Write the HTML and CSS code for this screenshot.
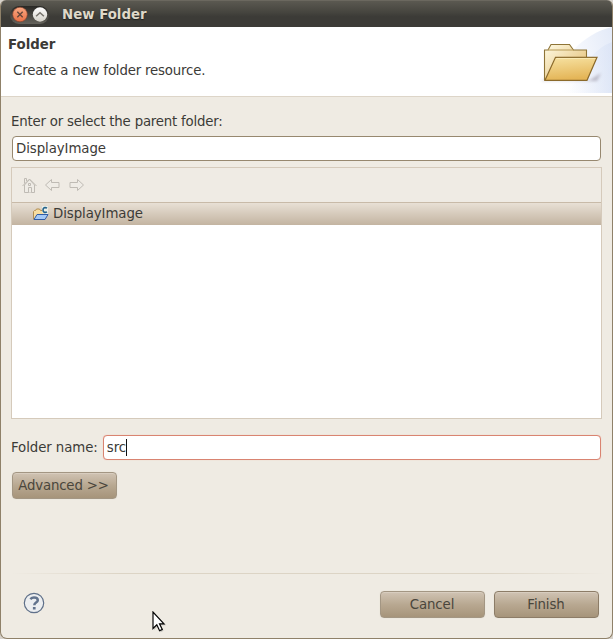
FILE: index.html
```
<!DOCTYPE html>
<html lang="en">
<head>
<meta charset="utf-8">
<title>New Folder</title>
<link rel="stylesheet" href="styles.css">
</head>
<body>
<main class="window">
  <header class="titlebar">
    <div class="controls">
      <svg width="39" height="18" viewBox="0 0 39 18">
        <defs>
          <linearGradient id="close" x2="0" y2="1"><stop stop-color="#f9a983"/><stop offset="1" stop-color="#ea7045"/></linearGradient>
          <linearGradient id="max" x2="0" y2="1"><stop stop-color="#fff"/><stop offset="1" stop-color="#d5d2c9"/></linearGradient>
        </defs>
        <circle cx="10" cy="8.500" r="7.300" fill="url(#close)" stroke="#8b402a" stroke-width=".6"/>
        <path d="M7.300 5.800l5.400 5.400M12.700 5.800l-5.400 5.400" stroke="#65473b" stroke-width="1.400"/>
        <circle cx="30" cy="8.500" r="7.200" fill="url(#max)"/>
        <path d="M26.100 10.200l3.900-3.500 3.900 3.500" fill="none" stroke="#77746d" stroke-width="1.500"/>
      </svg>
    </div>
    <h1 class="title">New Folder</h1>
  </header>
  <section class="banner">
    <div class="banner-text">
      <h2>Folder</h2>
      <p>Create a new folder resource.</p>
    </div>
    <svg class="banner-art" width="75" height="66" viewBox="0 0 75 66">
      <defs>
        <linearGradient id="sky" x1="0" x2="1" y1=".3"><stop stop-color="#fff"/><stop offset=".3" stop-color="#fafbfe"/><stop offset="1" stop-color="#e3eaf8"/></linearGradient>
        <linearGradient id="glow" x1="0" x2="1"><stop stop-color="#dce5f6" stop-opacity="0"/><stop offset="1" stop-color="#d3def4"/></linearGradient>
        <linearGradient id="back" x2="1" y2="1"><stop stop-color="#fffbe5"/><stop offset="1" stop-color="#dfb665"/></linearGradient>
        <linearGradient id="front" x2=".2" y2="1"><stop stop-color="#f7e3a4"/><stop offset="1" stop-color="#e4b557"/></linearGradient>
        <filter id="soft" x="-20%" y="-60%" width="140%" height="220%"><feGaussianBlur stdDeviation="1.8"/></filter>
      </defs>
      <path d="M75 0C46 7 25 30 8 66h67z" fill="url(#sky)"/>
      <path d="M75 15C56 22 46 39 32 66h43z" fill="url(#glow)" opacity=".5"/>
      <path d="M5 53h48l11-7-4 8H5z" fill="#8d8696" opacity=".5" filter="url(#soft)"/>
      <g transform="translate(1 0)">
        <path d="M6.500 53V23H10l3-5.500h18.500l4 5.500h13v30z" fill="url(#back)" stroke="#8e7437" stroke-width="1.100"/>
        <path d="M10 23h26" stroke="#b79b58"/>
        <path d="M7 53.300l10.500-23H59l-10 23z" fill="url(#front)" stroke="#8b6a2b" stroke-width="1.200"/>
        <path d="M18.500 31.400h39" stroke="#fff5cc" opacity=".6"/>
      </g>
    </svg>
  </section>
  <section class="content">
    <label class="parent-label">Enter or select the parent folder:</label>
    <div class="field">DisplayImage</div>
    <div class="tree">
      <div class="toolbar">
        <svg width="66" height="18" viewBox="0 0 66 18" fill="#efece6" stroke="#bfbbb4">
          <path d="M3.500 7.500V2.500h2V5" fill="none"/>
          <path d="M3.500 9v7.500h10V9L8.500 3.500z"/>
          <path d="M1.500 10l7-7 7 7" fill="none"/>
          <path d="M7.500 7.500h2v2h-2zM7.500 16.500v-5h3v5"/>
          <path d="M24.500 9l6-5.500v3h7.500v5h-7.500v3z"/>
          <path d="M62.500 9l-6-5.500v3H49v5h7.500v3z"/>
        </svg>
      </div>
      <div class="row">
        <svg width="17" height="16" viewBox="0 0 17 16">
          <path d="M1.500 13V5.500l1-1h1l1-1.500h3l1 1.500h4V13z" fill="#f7dda0" stroke="#b18c50"/>
          <path d="M2 13.500l3-5h11l-3 5z" fill="#a5c9f5" stroke="#315da5"/>
          <path d="M10 0h6v8h-4l-2-2z" fill="#e9eee9"/>
          <path d="M15 2.200C12.800.800 11 2 11 4s1.800 3.200 4 1.800" fill="none" stroke="#23628a" stroke-width="1.600"/>
        </svg>
        <span>DisplayImage</span>
      </div>
    </div>
    <div class="name-row">
      <label>Folder name:</label>
      <div class="field focused">src<span class="caret"></span></div>
    </div>
    <div class="button advanced">Advanced &gt;&gt;</div>
  </section>
  <footer class="footer">
    <svg class="help" width="22" height="22" viewBox="0 0 22 22">
      <circle cx="11" cy="11" r="9.700" fill="#eceef0" stroke="#60718a" stroke-width="1.200"/>
      <path d="M7.300 7.100Q9 5.500 11 5.500c2.400 0 3.800 1 3.800 2.700 0 2.400-3.500 2.300-3.500 5" fill="none" stroke="#62738d" stroke-width="2.500"/>
      <path d="M9.900 15h2.700v2.500H9.900z" fill="#62738d"/>
    </svg>
    <div class="button">Cancel</div>
    <div class="button default">Finish</div>
  </footer>
  <svg class="pointer" width="16" height="24" viewBox="0 0 16 24">
    <path d="M2 2v17l3.800-3.700 2.800 5.900 3-1.400-2.800-5.600h5.300z" fill="#777" opacity=".35"/>
    <path d="M1 1v16.500l3.800-3.700 2.800 5.900 2.700-1.300-2.800-5.600H12z" fill="#fff" stroke="#050505" stroke-width="1.200"/>
  </svg>
</main>
</body>
</html>
```
FILE: styles.css
```
* { box-sizing: border-box; }
body { margin: 0; background: #d7d2cb; font: 13.333px/18px "DejaVu Sans", sans-serif; letter-spacing: -.08px; color: #3c3b37; overflow: hidden; }
h1, h2, p { margin: 0; font-size: inherit; letter-spacing: 0; }
svg { display: block; flex-shrink: 0; }
.window { position: relative; display: flex; flex-direction: column; height: 639px; border: 1px solid #8f8169; border-top: 0; border-radius: 6px 6px 7px 7px; overflow: hidden; background: #efebe3; }
.titlebar { height: 27px; flex: none; display: flex; align-items: center; padding: 1px 9px 0; background: linear-gradient(#5b5951, #45443e 45%, #3c3b37 60%); border-top: 1px solid #6b685f; }
.controls { height: 18px; border-radius: 9px; background: linear-gradient(#292824, #65635c); }
.title { margin-left: 13px; color: #dfd8c8; text-shadow: 0 1px 1px #222; white-space: nowrap; }
.banner { height: 70px; flex: none; display: flex; justify-content: space-between; background: #fff; border-bottom: 1px solid #ddd5c8; }
.banner-text { padding: 9px 0 0 7px; }
.banner-text p { margin: 8px 0 0 5px; letter-spacing: -.18px; }
.content { height: 476px; flex: none; padding: 16px 10px 0; }
.parent-label { display: block; height: 23px; letter-spacing: -.21px; }
.field { height: 25px; margin: 0 1px; padding: 3px 3px 0; line-height: 18px; border: 1px solid #97886f; border-radius: 4px; background: #fff; }
.tree { height: 252px; margin-top: 6px; border: 1px solid #d5cabb; background: #fff; }
.toolbar { height: 34px; padding: 8px 0 0 9px; background: #efebe4; }
.row { height: 23px; display: flex; align-items: center; gap: 4px; padding: 0 0 1px 20px; border-top: 1px solid #c8baa8; background: linear-gradient(#e8e0d5, #c3b4a1); }
.name-row { display: flex; align-items: center; margin-top: 16px; }
.name-row .field { flex: 1; display: flex; margin-left: 5px; }
.focused { border-color: #d98471; box-shadow: 0 0 1px #edb2a4; }
.caret { width: 1px; height: 17px; background: #111; }
.button { width: 105px; height: 27px; padding-right: 1px; border: 1px solid #a39683; border-radius: 4px; background: linear-gradient(#d0c3b3, #b8a891 50%, #a6947a); box-shadow: inset 0 1px #d8cdbf, 0 0 1px #d9d1c3; text-align: center; line-height: 25px; color: #4a463c; }
.advanced { margin: 12px 1px 0; padding-right: 2px; letter-spacing: -.18px; }
.footer { flex: 1; display: flex; align-items: flex-start; gap: 9px; padding: 18px 13px 0 22px; background: linear-gradient(90deg, transparent 10px, #dcd4c5 120px, #dcd4c5 490px, transparent 605px) top / 100% 1px no-repeat; }
.help { margin: 1px auto 0 0; }
.default { border-color: #8c7c67; }
.pointer { position: absolute; left: 151px; top: 611px; }
```
